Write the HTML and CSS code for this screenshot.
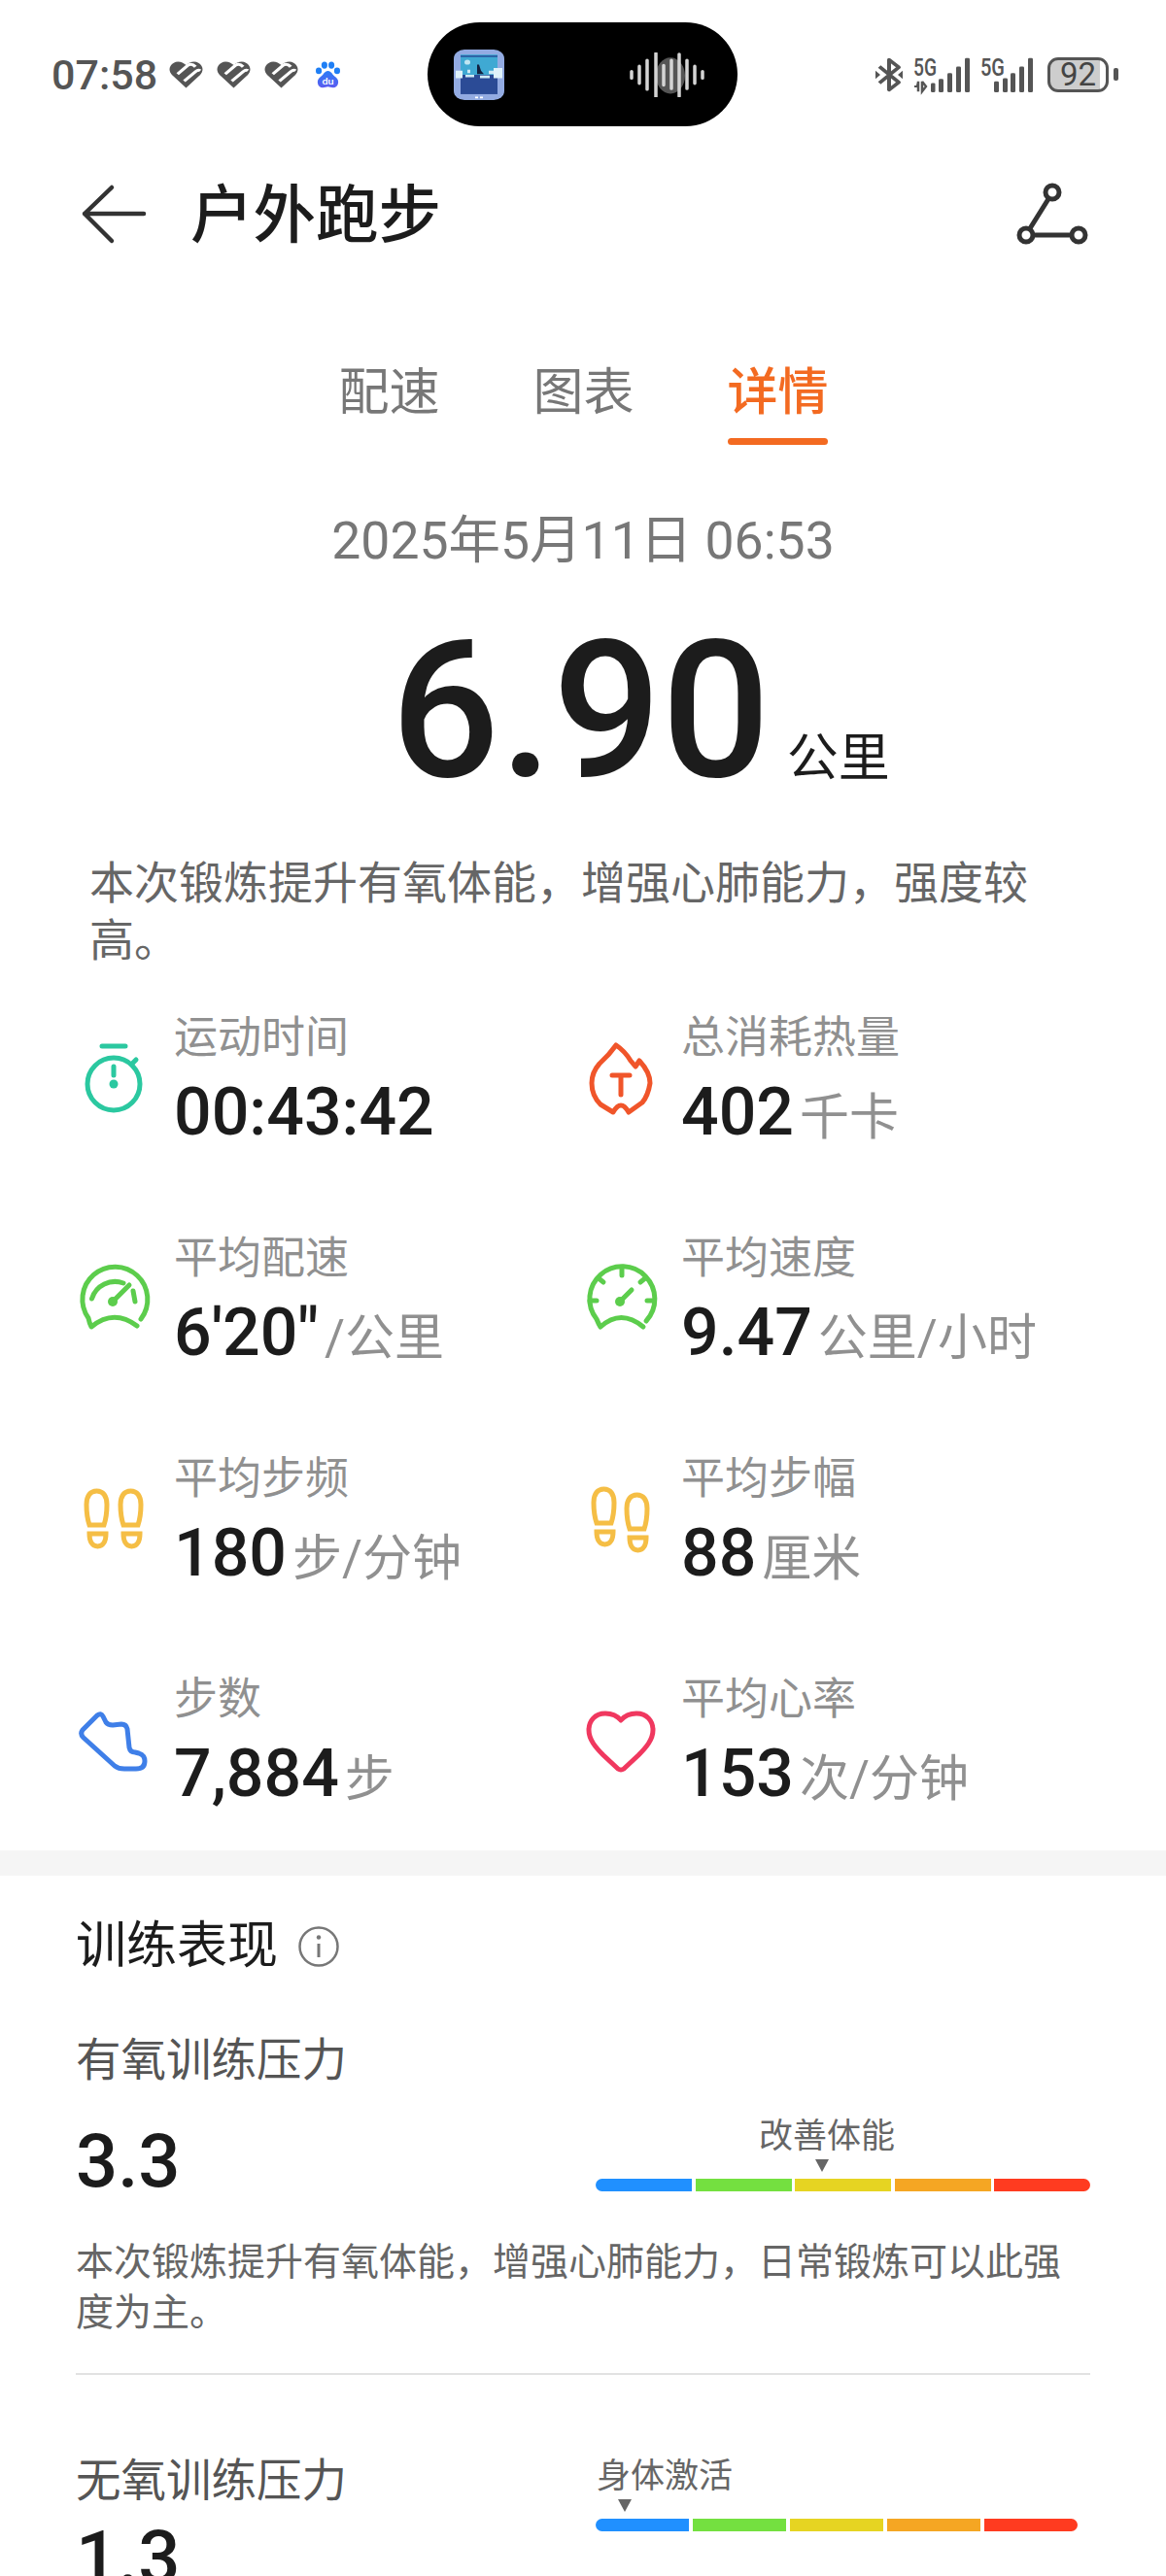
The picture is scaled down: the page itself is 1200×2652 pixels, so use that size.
FILE: index.html
```html
<!DOCTYPE html>
<html lang="zh">
<head>
<meta charset="utf-8">
<title>户外跑步</title>
<link rel="stylesheet" href="styles.css">
</head>
<body>
<div class="page">
  <div class="status">
    <div class="st-left">
      <span class="clock">07:58</span>
      <svg class="hh" viewBox="0 0 36 34" preserveAspectRatio="none"><use href="#hw"/></svg>
      <svg class="hh" viewBox="0 0 36 34" preserveAspectRatio="none"><use href="#hw"/></svg>
      <svg class="hh" viewBox="0 0 36 34" preserveAspectRatio="none"><use href="#hw"/></svg>
      <svg class="paw" viewBox="0 0 30 34" preserveAspectRatio="none">
        <defs><linearGradient id="pg" x1="0" y1="0" x2="0" y2="1"><stop offset="0" stop-color="#2a7df6"/><stop offset="1" stop-color="#5b5cf0"/></linearGradient></defs>
        <ellipse cx="4.5" cy="12" rx="3.4" ry="4" fill="#1f7ff5"/><ellipse cx="11" cy="5" rx="3.4" ry="4.4" fill="#1f7ff5"/><ellipse cx="19" cy="5" rx="3.4" ry="4.4" fill="#1f7ff5"/><ellipse cx="25.5" cy="12" rx="3.4" ry="4" fill="#1f7ff5"/>
        <path d="M15 12 C19 12 20 17 24 20 C29 24 27 33 21 33 C18 33 17 32 15 32 C13 32 12 33 9 33 C3 33 1 24 6 20 C10 17 11 12 15 12Z" fill="url(#pg)"/>
        <text x="15" y="29" class="du">du</text>
      </svg>
    </div>
    <div class="island">
      <svg class="thumb" viewBox="0 0 52 60" preserveAspectRatio="none">
        <rect width="52" height="60" rx="11" fill="#93abe2"/>
        <rect x="7" y="6" width="38" height="24" fill="#3fa9d3"/>
        <rect x="7" y="7" width="38" height="2" fill="#2c5aa0"/>
        <rect x="7" y="30" width="38" height="23" fill="#2b4b96"/>
        <circle cx="14" cy="15" r="3" fill="#bfe6f2"/>
        <path d="M2 25h7v9h-7zM41 22h9v12h-9z" fill="#dff2fa"/>
        <path d="M12 30h9v3h-9zM27 31h10v3h-10zM14 24h3v4h-3zM36 25h5v4h-5z" fill="#cfeaf5"/>
        <path d="M24 18l2 0 2 7 3 4h-7z" fill="#12203f"/>
        <path d="M22 56h3v2h-3zM27 56h3v2h-3z" fill="#fff"/>
      </svg>
      <svg class="wave" viewBox="0 0 78 52" preserveAspectRatio="none">
        <ellipse cx="42" cy="27" rx="15" ry="21" fill="#555"/>
        <g class="wave-bars">
          <path d="M2 22v8M10 16v20M18 9v34M27 1v51M35 15v23M43 9v33M51 2v49M59 9v33M67 16v20M75 22v8"/>
        </g>
      </svg>
    </div>
    <div class="st-right">
      <svg class="bt" viewBox="0 0 28 42" preserveAspectRatio="none"><path d="M4 11 L24 30 L14 39 V3 L24 12 L4 31"/><path class="bt-d" d="M0 16l5 5-5 5zM28 16l-5 5 5 5z"/></svg>
      <svg class="sig1" viewBox="0 0 58 42" preserveAspectRatio="none">
        <text x="0" y="22" class="fiveg" textLength="24" lengthAdjust="spacingAndGlyphs">5G</text>
        <path class="arrows" d="M5 29v12M1 35h3l1-5M9 29v12l4-6-4-6"/>
        <g class="bars"><rect x="18" y="31" width="4.500" height="11" rx="1.500"/><rect x="26" y="26" width="5" height="16" rx="1.500"/><rect x="35" y="19" width="5" height="23" rx="1.500"/><rect x="44" y="11" width="5" height="31" rx="1.500"/><rect x="53" y="1" width="5" height="41" rx="1.500"/></g>
      </svg>
      <svg class="sig2" viewBox="0 0 54 42" preserveAspectRatio="none">
        <text x="0" y="22" class="fiveg" textLength="25" lengthAdjust="spacingAndGlyphs">5G</text>
        <g class="bars"><rect x="14" y="29" width="5" height="13" rx="1.500"/><rect x="23" y="25" width="5" height="17" rx="1.500"/><rect x="31" y="19" width="5" height="23" rx="1.500"/><rect x="40" y="11" width="5" height="31" rx="1.500"/><rect x="49" y="1" width="5" height="41" rx="1.500"/></g>
      </svg>
      <div class="battery"><span>92</span></div>
    </div>
  </div>

  <header class="header">
    <svg class="back" viewBox="0 0 78 70"><path d="M37 6 L9 33 L37 61 M9 33 H70"/></svg>
    <h1 class="title">户外跑步</h1>
    <svg class="route" viewBox="0 0 78 70"><circle cx="39" cy="11" r="7"/><circle cx="12" cy="55" r="7"/><circle cx="66" cy="55" r="7"/><path d="M35.500 17 L15.500 49 M19 55 H59"/></svg>
  </header>

  <nav class="tabs">
    <div class="tab">配速</div>
    <div class="tab">图表</div>
    <div class="tab active">详情</div>
  </nav>

  <div class="date">2025年5月11日 06:53</div>
  <div class="distance"><span class="dist-num">6.90</span><span class="dist-unit">公里</span></div>
  <p class="summary">本次锻炼提升有氧体能&#65292;增强心肺能力&#65292;强度较高。</p>

  <section class="stats">
    <div class="stat">
      <svg class="ic ic-teal" viewBox="0 0 78 78"><circle cx="39" cy="42" r="27"/><path d="M27 3H51M58 21L62 17M39 24V33"/><circle class="solid" cx="39" cy="42" r="4.500"/></svg>
      <div class="stat-text"><div class="label">运动时间</div><div class="value">00:43:42</div></div>
    </div>
    <div class="stat">
      <svg class="ic ic-red" viewBox="0 0 78 78"><path d="M34 2 Q43 8 49 18 L54 24 L58 18 Q69 30 69 41 Q67 54 61 61 L47 71 Q43 64 39 64 Q35 64 31 71 L18 63 Q9 54 9 41 Q9 30 17 21 Q27 12 34 2Z"/><path d="M30 33H48M39 33V53"/></svg>
      <div class="stat-text"><div class="label">总消耗热量</div><div class="value">402<span class="unit">千卡</span></div></div>
    </div>
    <div class="stat">
      <svg class="ic ic-green" viewBox="0 1 78 78"><path d="M67 58 A33.500 33.500 0 1 0 13 57 Q14 62 16 66 Q39 47 63 65"/><path d="M16.500 37 A25 25 0 0 1 49 21M59 29 L61 40M38 40 L55 23"/><circle class="solid" cx="38" cy="40" r="5"/></svg>
      <div class="stat-text"><div class="label">平均配速</div><div class="value">6'20"<span class="unit">/公里</span></div></div>
    </div>
    <div class="stat">
      <svg class="ic ic-green" viewBox="0 1 78 78"><path d="M65 60 A33.500 33.500 0 1 0 14 58 Q16 63 18 66 Q39 47 62 66"/><path d="M40 6V13M7 39H14M66 39H73M16 16L21 20M64 16L59 20"/><path d="M38 40L50 28"/><circle class="solid" cx="38" cy="40" r="5"/></svg>
      <div class="stat-text"><div class="label">平均速度</div><div class="value">9.47<span class="unit">公里/小时</span></div></div>
    </div>
    <div class="stat">
      <svg class="ic ic-yellow" viewBox="0 0 78 78"><use href="#sole" y="-3"/><use href="#sole" x="35" y="-3"/></svg>
      <div class="stat-text"><div class="label">平均步频</div><div class="value">180<span class="unit">步/分钟</span></div></div>
    </div>
    <div class="stat">
      <svg class="ic ic-yellow" viewBox="0 0 78 78"><use href="#sole" y="-5"/><use href="#sole" x="34" y="1"/></svg>
      <div class="stat-text"><div class="label">平均步幅</div><div class="value">88<span class="unit">厘米</span></div></div>
    </div>
    <div class="stat">
      <svg class="ic ic-blue" viewBox="0 10 78 78"><path d="M7 36 L22 21 Q26 18 28 22 L31 28 Q33 31 38 31 L47 30 Q52 30 53 35 L55 54 Q56 59 61 59 L65 60 Q71 62 71 68 Q71 76 62 76 L50 76 Q44 76 40 73 L8 44 Q4 40 7 36 Z"/></svg>
      <div class="stat-text"><div class="label">步数</div><div class="value">7,884<span class="unit">步</span></div></div>
    </div>
    <div class="stat">
      <svg class="ic ic-pink" viewBox="0 10 78 78"><path d="M39 26 C34 20 28 19 23 19 C12 19 6 27 6 36 C6 46 13 54 21 62 L36 76 Q39 78 42 76 L57 62 C65 54 72 46 72 36 C72 27 66 19 55 19 C50 19 44 20 39 26Z"/></svg>
      <div class="stat-text"><div class="label">平均心率</div><div class="value">153<span class="unit">次/分钟</span></div></div>
    </div>
  </section>

  <div class="band"></div>

  <section class="perf">
    <div class="perf-head">
      <h2 class="perf-title">训练表现</h2>
      <svg class="info" viewBox="0 0 44 44"><circle cx="22" cy="22" r="19.500"/><path d="M22 19V33"/><circle class="dot" cx="22" cy="12.500" r="2.200"/></svg>
    </div>
    <div class="block">
      <div class="block-name">有氧训练压力</div>
      <div class="metric">
        <div class="score">3.3</div>
        <div class="gauge gauge-a">
          <div class="gauge-label">改善体能</div>
          <div class="marker"></div>
          <div class="bar"><i class="c1"></i><i class="c2"></i><i class="c3"></i><i class="c4"></i><i class="c5"></i></div>
        </div>
      </div>
      <p class="note">本次锻炼提升有氧体能&#65292;增强心肺能力&#65292;日常锻炼可以此强度为主。</p>
    </div>
    <div class="rule"></div>
    <div class="block-b">
      <div class="left-b">
        <div class="block-name">无氧训练压力</div>
        <div class="score score-b">1.3</div>
      </div>
      <div class="gauge gauge-b">
        <div class="gauge-label">身体激活</div>
        <div class="marker"></div>
        <div class="bar"><i class="c1"></i><i class="c2"></i><i class="c3"></i><i class="c4"></i><i class="c5"></i></div>
      </div>
    </div>
  </section>
</div>
<svg class="defs" width="0" height="0"><defs>
  <g id="hw"><path class="hw-fill" d="M18 33.500 L3 17 C-1 12 0 5 5 2 C9 -1 15 1 18 5 C21 1 27 -1 31 2 C36 5 37 12 33 17Z"/><path class="hw-cut" d="M9 16 L20 5 Q24 2 28 7 M16 25 L28 13 Q31 10 33 12"/></g>
  <path id="sole" d="M14 45 C11 36 11 30 11 24 C11 15 15 10 21.500 10 C28 10 32 15 32 24 C32 30 32 36 29 45 Z M14 54 H31 C31 62 28 67 22.500 67 C17 67 14 62 14 54Z"/>
</defs></svg>
</body>
</html>
```
FILE: styles.css
```css
* { box-sizing: border-box; }
html, body { margin: 0; padding: 0; background: #fff; }
body { font-family: Roboto, "Noto Sans CJK SC", sans-serif; color: #1c1c1c; }
.page { width: 1200px; height: 2652px; overflow: hidden; background: #fff; }
.defs { position: absolute; }

/* status bar */
.status { display: flex; align-items: center; height: 130px; padding-top: 23px; }
.st-left { width: 440px; padding-left: 53px; display: flex; align-items: center; }
.clock { font-size: 43px; font-weight: 500; color: #555; line-height: 40px; width: 121px; }
.hh { width: 35px; height: 28px; margin-right: 14px; }
.hw-fill { fill: #555; }
.hw-cut { fill: none; stroke: #fff; stroke-width: 3.5; }
.paw { width: 27px; height: 28px; margin-left: 3px; }
.du { fill: #fff; font-size: 12px; font-weight: 500; text-anchor: middle; }
.island { width: 319px; height: 107px; background: #000; border-radius: 54px; display: flex; align-items: center; padding-left: 27px; }
.thumb { width: 52px; height: 52px; }
.wave { width: 78px; height: 46px; margin-left: 129px; }
.wave-bars path { stroke: #d4d4d4; stroke-width: 3.5; stroke-linecap: round; fill: none; }
.st-right { display: flex; align-items: center; padding-left: 142px; }
.bt { width: 28px; height: 36px; }
.bt path { fill: none; stroke: #555; stroke-width: 4; stroke-linejoin: round; }
.bt .bt-d { fill: #555; stroke: none; }
.sig1 { width: 58px; height: 36px; margin-left: 11px; overflow: visible; }
.sig2 { width: 54px; height: 36px; margin-left: 11px; overflow: visible; }
.fiveg { font-size: 30px; font-weight: 500; fill: #555; }
.bars rect { fill: #555; }
.arrows { fill: none; stroke: #555; stroke-width: 2.500; }
.battery { position: relative; width: 63px; height: 36px; margin-left: 15px; border: 3.500px solid #555; border-radius: 11px; background: linear-gradient(90deg, #cdcdcd 90%, #fff 90%); display: flex; align-items: center; justify-content: center; font-size: 33px; color: #444; }
.battery::after { content: ""; position: absolute; right: -13px; top: 8px; width: 5px; height: 13px; background: #555; border-radius: 2px; }
.battery span { line-height: 30px; }

/* header */
.header { display: flex; align-items: center; height: 70px; margin-top: 57px; padding-left: 78px; }
.back { width: 78px; height: 70px; }
.back path { fill: none; stroke: #333; stroke-width: 4.500; stroke-linecap: round; stroke-linejoin: round; }
.title { margin: 0 0 0 40px; font-size: 64.500px; font-weight: 500; line-height: 70px; color: #1c1c1c; flex: 1; }
.route { width: 78px; height: 70px; margin-right: 78px; }
.route circle, .route path { fill: none; stroke: #333; stroke-width: 5; }

/* tabs */
.tabs { display: flex; justify-content: center; gap: 97px; margin-top: 115px; }
.tab { width: 103px; font-size: 52px; line-height: 66px; color: #777; white-space: nowrap; }
.tab::after { content: ""; display: block; height: 7px; margin-top: 13px; border-radius: 4px; }
.tab.active { color: #f36a21; font-weight: 500; }
.tab.active::after { background: #f36a21; }

/* distance */
.date { margin-top: 69px; text-align: center; font-size: 53.500px; line-height: 60px; color: #777; }
.distance { display: flex; justify-content: center; align-items: baseline; margin-top: 45px; height: 200px; line-height: 200px; padding-left: 118px; }
.dist-num { font-size: 197px; font-weight: 500; color: #1c1c1c; }
.dist-unit { font-size: 53px; margin-left: 17px; color: #1c1c1c; }
.summary { margin: 48px 0 0; padding: 0 120px 0 92px; font-size: 46px; line-height: 59px; color: #666; }

/* stats */
.stats { display: grid; grid-template-columns: 522px 522px; grid-auto-rows: 180px; row-gap: 47px; padding-left: 78px; margin-top: 46px; }
.stat { display: flex; align-items: flex-start; gap: 23px; }
.ic { width: 78px; height: 78px; flex: none; margin-top: 30px; overflow: visible; }
.ic path, .ic circle { fill: none; stroke-width: 5; stroke-linecap: round; stroke-linejoin: round; }
.ic .solid { stroke: none; }
.ic-teal path, .ic-teal circle { stroke: #2bc8a0; }
.ic-teal .solid { fill: #2bc8a0; }
.ic-red path { stroke: #f0552a; }
.ic-green path { stroke: #5ccd4c; }
.ic-green .solid { fill: #5ccd4c; }
.ic-yellow use { stroke: #f5be45; fill: none; stroke-width: 5; }
.ic-blue path { stroke: #3f7fe8; }
.ic-pink path { stroke: #f0385f; }
.label { font-size: 45px; line-height: 50px; color: #909090; }
.value { font-size: 68px; font-weight: 500; line-height: 80px; margin-top: 11px; color: #1c1c1c; }
.unit { font-size: 51px; font-weight: 400; color: #909090; margin-left: 6px; }

/* band */
.band { height: 26px; background: #f5f5f5; }

/* performance */
.perf { padding: 0 78px; }
.perf-head { display: flex; align-items: center; gap: 20px; margin-top: 43px; height: 60px; }
.perf-title { margin: 0; font-size: 52px; font-weight: 400; line-height: 60px; color: #1c1c1c; }
.info { width: 44px; height: 44px; }
.info circle { fill: none; stroke: #777; stroke-width: 2.500; }
.info path { stroke: #777; stroke-width: 3; }
.info .dot { fill: #777; stroke: none; }
.block-name { font-size: 46.500px; line-height: 60px; color: #555; white-space: nowrap; }
.block { margin-top: 57px; }
.metric { display: flex; justify-content: space-between; align-items: flex-start; margin-top: 29px; }
.score { font-size: 76px; font-weight: 500; line-height: 88px; margin-top: 1px; color: #1c1c1c; }
.gauge-a { width: 509px; }
.gauge-b { width: 496px; margin-left: 535px; padding-top: 6px; }
.gauge-label { font-size: 35px; line-height: 40px; color: #666; white-space: nowrap; }
.gauge-a .gauge-label { padding-left: 168px; }
.gauge-b .gauge-label { padding-left: 1px; }
.marker { width: 0; height: 0; border-left: 7px solid transparent; border-right: 7px solid transparent; border-top: 13px solid #666; margin-top: 3px; }
.gauge-a .marker { margin-left: 226px; }
.gauge-b .marker { margin-left: 23px; }
.bar { display: flex; gap: 3.500px; height: 13px; margin-top: 7px; border-radius: 7px; overflow: hidden; }
.bar i { flex: 1; display: block; }
.c1 { background: #2090ff; }
.c2 { background: #74e040; }
.c3 { background: #e6d422; }
.c4 { background: #f5a623; }
.c5 { background: #ff3b20; }
.note { margin: 34px 0 0; font-size: 39px; line-height: 52px; color: #666; }
.rule { height: 2px; background: #e2e2e2; margin-top: 36px; }
.block-b { position: relative; margin-top: 79px; }
.score-b { margin-top: 5px; }
.left-b { position: absolute; left: 0; top: 0; }
```
